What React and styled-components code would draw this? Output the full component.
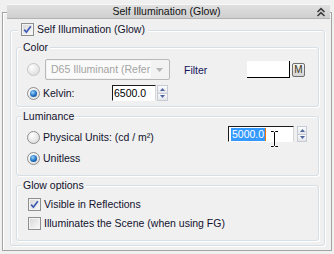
import styled, { createGlobalStyle } from 'styled-components';

const GlobalStyle = createGlobalStyle`
  * { box-sizing: border-box; }
  html, body {
    margin: 0;
    padding: 0;
    background: #f0f0f0;
  }
  body {
    font-family: 'Liberation Sans', Arial, sans-serif;
    font-size: 10.5px;
    color: #12122e;
  }
`;

const Page = styled.div`
  width: 334px;
  height: 254px;
  padding-top: 12px;
  overflow: hidden;
`;

const Rollout = styled.div`
  margin-left: 2px;
  width: 330px;
  border: 1px solid #a3a3a3;
  box-shadow: inset 1px 1px 0 #fff;
  padding-bottom: 4px;
`;

const Header = styled.div`
  margin: -9px 0 0 4px;
  width: 323px;
  height: 15px;
  display: grid;
  grid-template-columns: 1fr auto 1fr;
  align-items: center;
  padding-right: 4px;
  background: linear-gradient(#e0e0e0, #cfcfcf);
  border-top: 1px solid #f7f7f7;
  border-bottom: 1px solid #b2b2b2;
  line-height: 13px;
  color: #111;
  span:first-child { grid-column: 2; }
  svg { justify-self: end; }
`;

const Group = styled.fieldset`
  margin: ${({ $top }) => $top}px 0 0 ${({ $left }) => $left || 0}px;
  padding: 0;
  width: ${({ $width }) => $width}px;
  min-width: 0;
  border: 1px solid #d5dfe5;
  border-radius: 3px;
  box-shadow: inset 1px 1px 0 #fff, 1px 1px 0 #fff;
`;

const Legend = styled.legend`
  margin-left: ${({ $indent }) => $indent}px;
  padding: 0 ${({ $pad }) => $pad}px;
  line-height: ${({ $lh }) => $lh}px;
  background: #f0f0f0;
`;

const GroupBody = styled.div`
  padding: ${({ $pad }) => $pad};
`;

const Row = styled.div`
  display: flex;
  align-items: ${({ $align }) => $align || 'center'};
  height: ${({ $h }) => $h}px;
  margin-top: ${({ $gap }) => $gap || 0}px;
`;

const Choice = styled.label`
  display: inline-flex;
  align-items: center;
  height: 13px;
  margin-top: ${({ $top }) => $top || 0}px;
  line-height: 13px;
  white-space: nowrap;
  span + span { margin-left: 3px; }
`;

const RadioDot = styled.span`
  flex: none;
  width: 13px;
  height: 13px;
  border-radius: 50%;
  border: 1px solid ${({ $disabled }) => ($disabled ? '#c6c6c6' : '#8e8f8f')};
  background: radial-gradient(circle at 35% 30%, #ffffff, #d6d6d6);
  display: grid;
  place-items: center;
  &::after {
    content: '';
    display: ${({ $checked }) => ($checked ? 'block' : 'none')};
    width: 7px;
    height: 7px;
    border-radius: 50%;
    background: radial-gradient(circle at 40% 35%, #9ad6ff, #1f6fc0 55%, #0c3b74);
  }
`;

const Box = styled.span`
  flex: none;
  width: 13px;
  height: 13px;
  border: 1px solid #8e8f8f;
  background: linear-gradient(135deg, #d6d6d6, #fbfbfb);
  box-shadow: inset 0 0 0 1px #f3f3f3;
  display: grid;
  place-items: center;
`;

const Select = styled.div`
  flex: none;
  width: 125px;
  height: 21px;
  margin-left: 5px;
  display: flex;
  align-items: center;
  border: 1px solid #b9b9b9;
  border-radius: 2px;
  background: #f2f2f2;
  padding: 1px;
`;

const SelectText = styled.div`
  width: 104px;
  height: 17px;
  padding-left: 4px;
  line-height: 17px;
  background: #fafafa;
  color: #a4a4a4;
  white-space: nowrap;
  overflow: hidden;
`;

const SelectArrow = styled.div`
  flex: 1;
  display: grid;
  place-items: center;
`;

const FilterLabel = styled.span`
  width: 63px;
  margin-left: 14px;
  color: #14145a;
`;

const Swatch = styled.div`
  width: 43px;
  height: 17px;
  background: #fff;
  border-right: 1px solid #000;
  border-bottom: 1px solid #000;
`;

const MapButton = styled.div`
  width: 13px;
  height: 14px;
  margin-left: 2px;
  border: 1px solid #6f6f6f;
  border-radius: 2px;
  background: linear-gradient(#f4f4f4, #d4d4d4);
  font-size: 10px;
  line-height: 12px;
  text-align: center;
  color: #3a3412;
`;

const FixedLabel = styled.span`
  width: ${({ $width }) => $width}px;
  margin-left: 3px;
`;

const Field = styled.div`
  position: relative;
  flex: none;
  width: ${({ $width }) => $width}px;
  height: 16px;
  margin-left: ${({ $push }) => ($push ? 'auto' : '0')};
  padding-left: ${({ $inset }) => $inset}px;
  background: #fff;
  border-top: 1px solid #1c1c1c;
  border-left: 1px solid #1c1c1c;
  border-right: 1px solid #d6d6d6;
  border-bottom: 1px solid #fdfdfd;
  line-height: 14px;
  color: #000;
  white-space: nowrap;
`;

const Selected = styled.span`
  display: inline-block;
  height: 13px;
  margin-top: 1px;
  padding: 0 1px;
  line-height: 12px;
  vertical-align: top;
  background: #3399ff;
  color: #fff;
  border-right: 1px solid #f07800;
`;

const Cursor = styled.svg`
  position: absolute;
  left: 41px;
  top: 3px;
`;

const Spinner = styled.div`
  flex: none;
  width: ${({ $width }) => $width}px;
  height: 16px;
  margin-left: ${({ $gap }) => $gap}px;
  display: flex;
  flex-direction: column;
`;

const SpinButton = styled.span`
  flex: 1;
  display: grid;
  place-items: center;
  border: 1px solid #c6cbd6;
  background: linear-gradient(#fbfbfb, #e3e5ea);
  & + & { border-top: none; }
`;

const Check = () => (
  <svg width="11" height="11" viewBox="0 0 11 11">
    <path d="M2.2 5.6 L4.4 8.2 L8.8 2.2" fill="none" stroke="#3f5ab5" strokeWidth="1.7" />
  </svg>
);

const Arrow = ({ down }) => (
  <svg width="5" height="3" viewBox="0 0 5 3">
    <path d={down ? 'M0 0 H5 L2.5 3 Z' : 'M0 3 H5 L2.5 0 Z'} fill="#4f66a0" />
  </svg>
);

const Spin = ({ width, gap }) => (
  <Spinner $width={width} $gap={gap}>
    <SpinButton><Arrow /></SpinButton>
    <SpinButton><Arrow down /></SpinButton>
  </Spinner>
);

const Radio = ({ checked, disabled, children, top }) => (
  <Choice $top={top}>
    <RadioDot $checked={checked} $disabled={disabled} />
    {children && <span>{children}</span>}
  </Choice>
);

const CheckBox = ({ checked, children }) => (
  <Choice>
    <Box>{checked && <Check />}</Box>
    <span>{children}</span>
  </Choice>
);

export default function App() {
  return (
    <Page>
      <GlobalStyle />
      <Rollout>
        <Header>
          <span>Self Illumination (Glow)</span>
          <svg width="10" height="10" viewBox="0 0 10 10">
            <path d="M1.5 5 L5 1.6 L8.5 5 M1.5 9 L5 5.6 L8.5 9" fill="none" stroke="#3c3c3c" strokeWidth="1.6" />
          </svg>
        </Header>

        <Group $top={4} $left={7} $width={315}>
          <Legend $indent={7} $pad={3} $lh={14}>
            <CheckBox checked>Self Illumination (Glow)</CheckBox>
          </Legend>
          <GroupBody $pad="3px 5px 4px 5px">
            <Group $top={0} $width={303}>
              <Legend $indent={4} $pad={2} $lh={13}>Color</Legend>
              <GroupBody $pad="5px 0 5px 10px">
                <Row $h={21}>
                  <Radio disabled />
                  <Select>
                    <SelectText>D65 Illuminant (Refer</SelectText>
                    <SelectArrow>
                      <svg width="7" height="4" viewBox="0 0 7 4">
                        <path d="M0 0 H7 L3.5 4 Z" fill="#b4b4b4" />
                      </svg>
                    </SelectArrow>
                  </Select>
                  <FilterLabel>Filter</FilterLabel>
                  <Swatch />
                  <MapButton>M</MapButton>
                </Row>
                <Row $h={16} $gap={5}>
                  <RadioDot $checked />
                  <FixedLabel $width={69}>Kelvin:</FixedLabel>
                  <Field $width={44} $inset={1}>6500.0</Field>
                  <Spin width={11} gap={1} />
                </Row>
              </GroupBody>
            </Group>

            <Group $top={3} $width={303}>
              <Legend $indent={4} $pad={2} $lh={13}>Luminance</Legend>
              <GroupBody $pad="3px 11px 10px 10px">
                <Row $align="flex-start">
                  <Radio top={5}>Physical Units: (cd / m²)</Radio>
                  <Field $width={66} $inset={2} $push>
                    <Selected>5000.0</Selected>
                    <Cursor width="9" height="18" viewBox="0 0 9 18">
                      <path d="M1 1.5 H3.5 L4.5 2.5 L5.5 1.5 H8 M4.5 2.5 V15.5 M1 16.5 H3.5 L4.5 15.5 L5.5 16.5 H8" fill="none" stroke="#fff" strokeWidth="2.2" />
                      <path d="M1 1.5 H3.5 L4.5 2.5 L5.5 1.5 H8 M4.5 2.5 V15.5 M1 16.5 H3.5 L4.5 15.5 L5.5 16.5 H8" fill="none" stroke="#000" strokeWidth="1" />
                    </Cursor>
                  </Field>
                  <Spin width={10} gap={3} />
                </Row>
                <Row $gap={8}>
                  <Radio checked>Unitless</Radio>
                </Row>
              </GroupBody>
            </Group>

            <Group $top={3} $width={303}>
              <Legend $indent={4} $pad={2} $lh={13}>Glow options</Legend>
              <GroupBody $pad="6px 0 10px 11px">
                <Row>
                  <CheckBox checked>Visible in Reflections</CheckBox>
                </Row>
                <Row $gap={6}>
                  <CheckBox>Illuminates the Scene (when using FG)</CheckBox>
                </Row>
              </GroupBody>
            </Group>
          </GroupBody>
        </Group>
      </Rollout>
    </Page>
  );
}
